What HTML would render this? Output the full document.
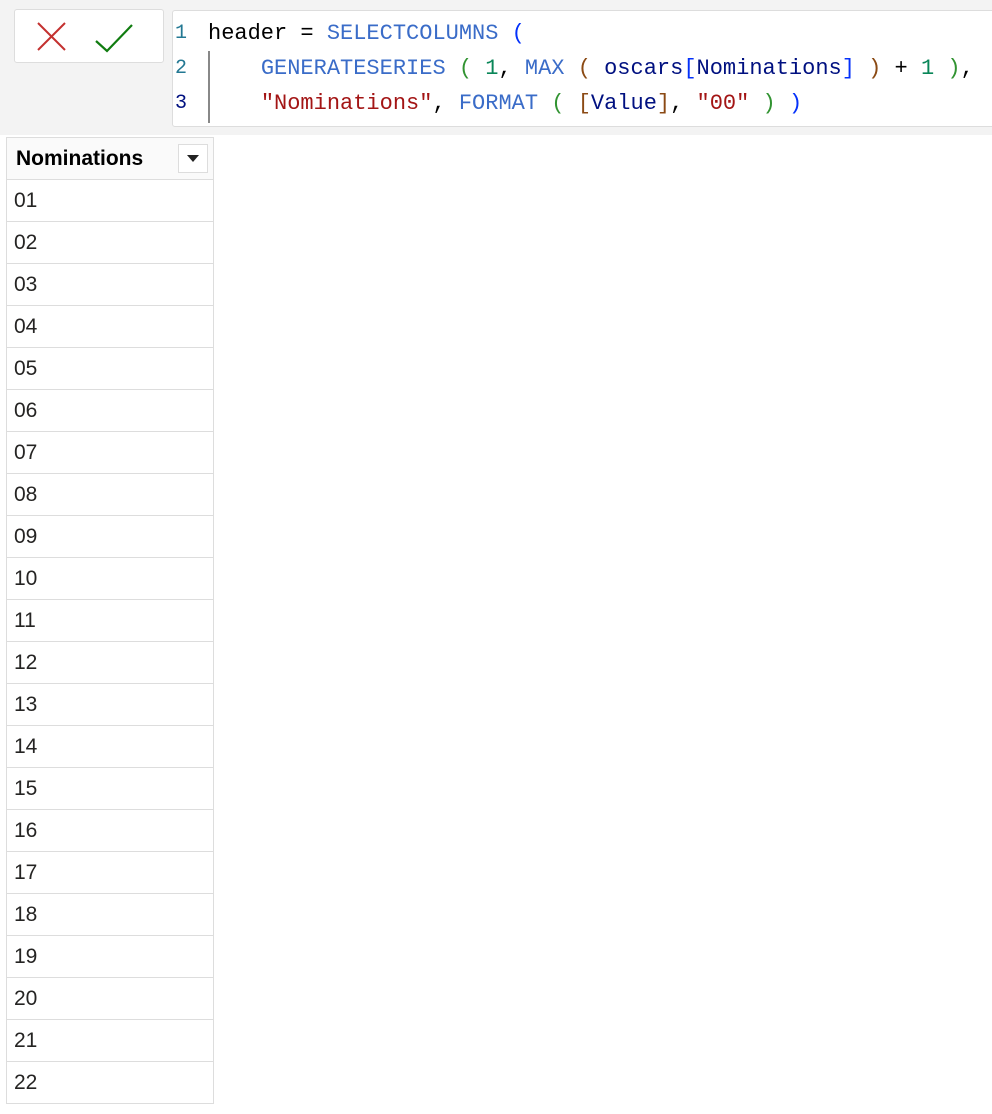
<!DOCTYPE html>
<html><head><style>
body{margin:0;width:992px;height:1114px;background:#fff;position:relative;overflow:hidden;font-family:"Liberation Sans",sans-serif}
.top{position:absolute;left:0;top:0;width:992px;height:135px;background:#f3f3f3}
.btns{position:absolute;left:14px;top:9px;width:148px;height:52px;background:#fff;border:1px solid #ddd;border-radius:3px}
.code{position:absolute;left:172px;top:10px;width:830px;height:115px;background:#fff;border:1px solid #ddd;border-radius:3px;font-family:"Liberation Mono",monospace;font-size:22px}
.ln{position:absolute;left:0;height:35px;line-height:35px;white-space:pre}
.num{position:absolute;left:2px;font-size:20px}
.bar{position:absolute;left:35px;top:40px;width:2px;height:72px;background:#888}
.k{color:#3a6cc8}.g{color:#098658}.s{color:#a31515}.c{color:#001080}.b1{color:#0431fa}.b2{color:#8b4a14}.b3{color:#319331}
table{position:absolute;left:6px;top:137px;border-collapse:collapse;width:208px}
td{border:1px solid #ddd;height:41px;padding:0 0 0 7px;font-size:21px;color:#252423}
th{border:1px solid #ddd;height:41px;text-align:left;padding:0 0 0 9px;font-size:21px;background:#fafafa;position:relative}
.dd{position:absolute;right:5px;top:6px;width:28px;height:27px;border:1px solid #ddd;background:#fff}
.dd:after{content:"";position:absolute;left:8px;top:10px;border-left:6px solid transparent;border-right:6px solid transparent;border-top:7px solid #222}
</style></head><body>
<div class="top"></div>
<div class="btns">
<svg width="148" height="52" style="position:absolute;left:0;top:0"><path d="M23 13 L50 40 M50 13 L23 40" stroke="#c4312f" stroke-width="2" fill="none"/><path d="M81 31 L92 41 L117 15" stroke="#107c10" stroke-width="2.2" fill="none"/></svg>
</div>
<div class="code">
<div class="bar"></div>
<div class="ln" style="top:5px"><span class="num" style="color:#237893">1</span><span style="position:absolute;left:35px">header = <span class="k">SELECTCOLUMNS</span> <span class="b1">(</span></span></div>
<div class="ln" style="top:40px"><span class="num" style="color:#237893">2</span><span style="position:absolute;left:35px">    <span class="k">GENERATESERIES</span> <span class="b3">(</span> <span class="g">1</span>, <span class="k">MAX</span> <span class="b2">(</span> <span class="c">oscars</span><span class="b1">[</span><span class="c">Nominations</span><span class="b1">]</span> <span class="b2">)</span> + <span class="g">1</span> <span class="b3">)</span>,</span></div>
<div class="ln" style="top:75px"><span class="num" style="color:#001080">3</span><span style="position:absolute;left:35px">    <span class="s">"Nominations"</span>, <span class="k">FORMAT</span> <span class="b3">(</span> <span class="b2">[</span><span class="c">Value</span><span class="b2">]</span>, <span class="s">"00"</span> <span class="b3">)</span> <span class="b1">)</span></span></div>
</div>
<table>
<tr><th>Nominations<div class="dd"></div></th></tr>
<tr><td>01</td></tr><tr><td>02</td></tr><tr><td>03</td></tr><tr><td>04</td></tr><tr><td>05</td></tr><tr><td>06</td></tr><tr><td>07</td></tr><tr><td>08</td></tr><tr><td>09</td></tr><tr><td>10</td></tr><tr><td>11</td></tr><tr><td>12</td></tr><tr><td>13</td></tr><tr><td>14</td></tr><tr><td>15</td></tr><tr><td>16</td></tr><tr><td>17</td></tr><tr><td>18</td></tr><tr><td>19</td></tr><tr><td>20</td></tr><tr><td>21</td></tr><tr><td>22</td></tr>
</table>
</body></html>
